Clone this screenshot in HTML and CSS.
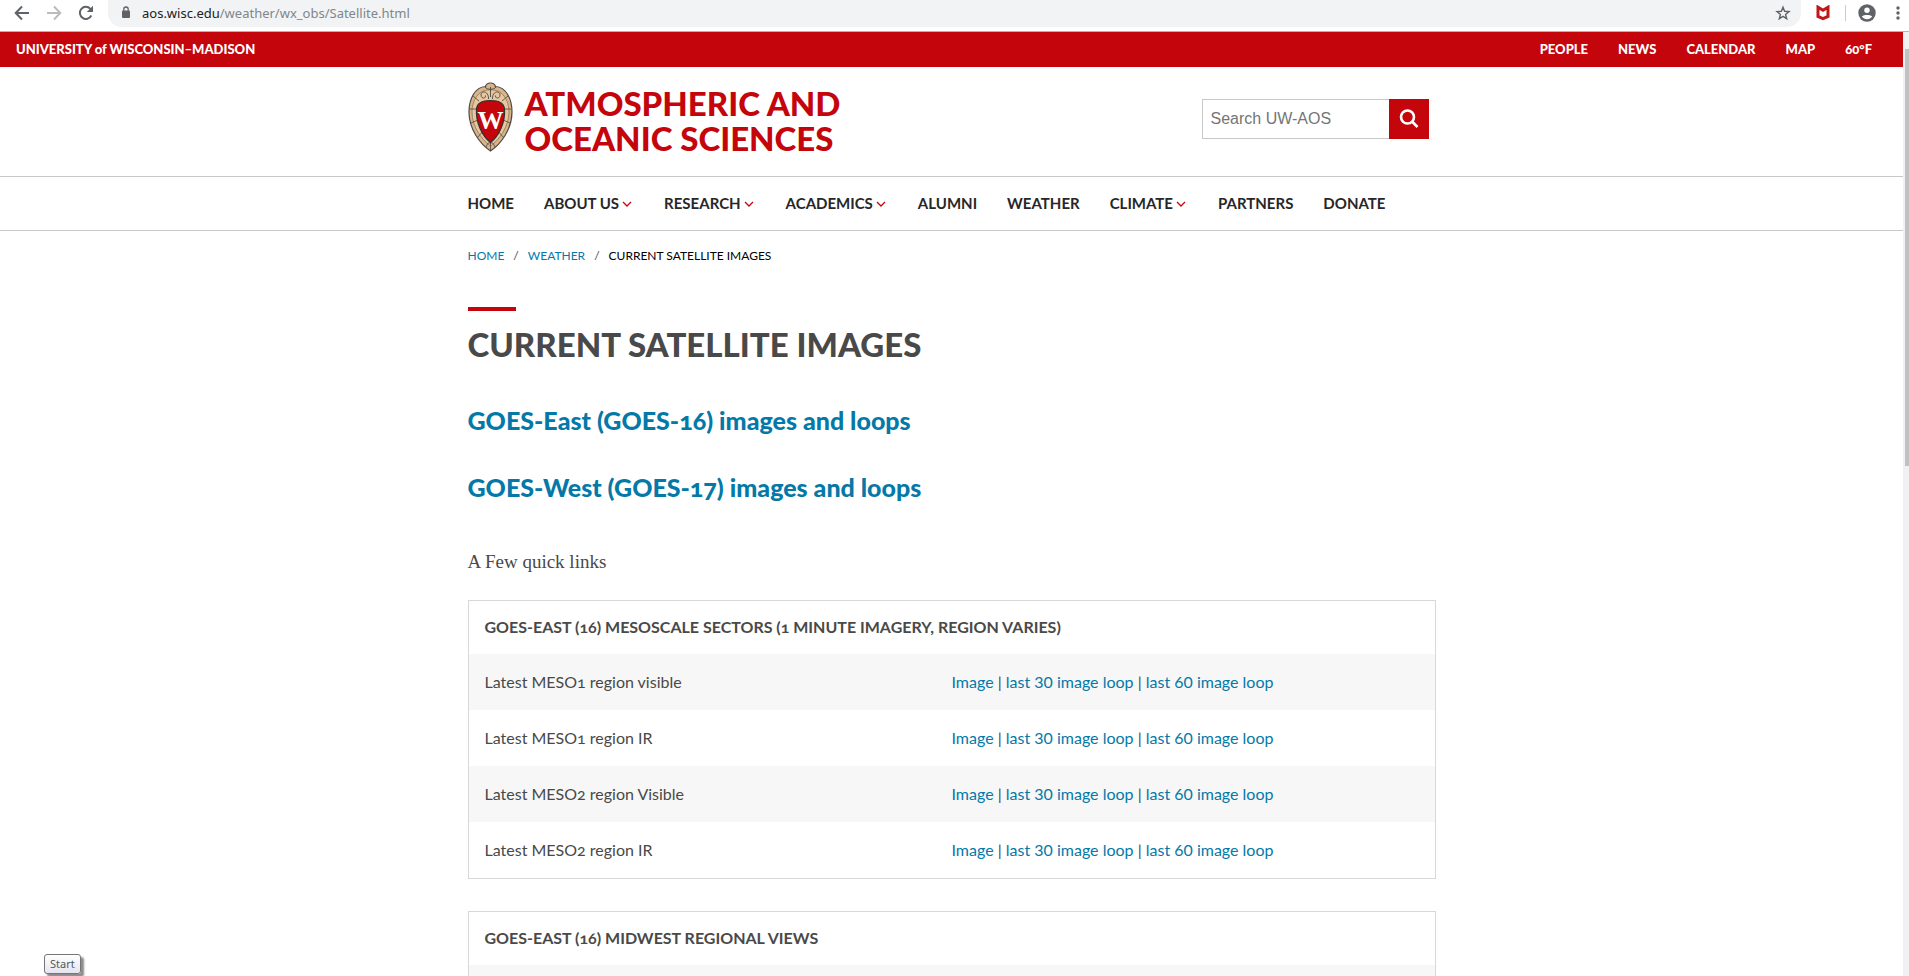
FILE: index.html
```html
<!DOCTYPE html>
<html lang="en">
<head>
<meta charset="utf-8">
<title>Current Satellite Images</title>
<link rel="stylesheet" href="styles.css">
</head>
<body>
<div class="window">
  <div class="browser-bar">
    <button class="tool" type="button" aria-label="Back"><svg width="16" height="16" viewBox="0 0 16 16" fill="none" stroke="#5f6368" stroke-width="2"><path d="M15 8H2M8 1.5L1.700 8L8 14.500"/></svg></button>
    <button class="tool" type="button" aria-label="Forward"><svg width="16" height="16" viewBox="0 0 16 16" fill="none" stroke="#babcbe" stroke-width="2"><path d="M1 8H14M8 1.500L14.300 8L8 14.500"/></svg></button>
    <button class="tool" type="button" aria-label="Reload"><svg width="16" height="16" viewBox="0 0 16 16"><path d="M13.300 10.500A6 6 0 1 1 12.400 3.900L13.800 5.300" fill="none" stroke="#5f6368" stroke-width="2"/><path d="M15 .8V7H8.800Z" fill="#5f6368"/></svg></button>
    <div class="address">
      <svg width="10" height="13" viewBox="0 0 10 13"><rect x="1" y="4.500" width="8" height="7.500" rx="1" fill="#5f6368"/><path d="M2.800 5V3.200a2.200 2.200 0 0 1 4.400 0V5" fill="none" stroke="#5f6368" stroke-width="1.300"/></svg>
      <span class="url"><span class="host">aos.wisc.edu</span>/weather/wx_obs/Satellite.html</span>
      <button class="tool" type="button" aria-label="Bookmark this page"><svg width="16" height="16" viewBox="0 0 16 16" fill="none" stroke="#5f6368" stroke-width="1.400"><path d="M8 2.200L9.600 6.300L14 6.600L10.600 9.400L11.700 13.700L8 11.300L4.300 13.700L5.400 9.400L2 6.600L6.400 6.300Z"/></svg></button>
    </div>
    <button class="tool shield" type="button" aria-label="Site safety"><svg width="16" height="16" viewBox="0 0 16 16" fill="none" stroke="#c01818" stroke-width="3"><path d="M3 2.200V11.400L8 13.600L13 11.400V2.200L8 5.300Z"/></svg></button>
    <span class="divider"></span>
    <button class="tool" type="button" aria-label="Profile"><svg width="18" height="18" viewBox="0 0 18 18"><circle cx="9" cy="9" r="8.700" fill="#5f6368"/><circle cx="9" cy="6.200" r="2.700" fill="#fff"/><path d="M3.800 12.600C4.600 10.500 13.400 10.500 14.200 12.600C12 16 6 16 3.800 12.600Z" fill="#fff"/></svg></button>
    <button class="tool menu" type="button" aria-label="Menu"><svg width="4" height="16" viewBox="0 0 4 16" fill="#5f6368"><circle cx="2" cy="3" r="1.700"/><circle cx="2" cy="8" r="1.700"/><circle cx="2" cy="13" r="1.700"/></svg></button>
  </div>

  <div class="viewport">
    <div class="page">
      <div class="topbar">
        <a class="university" href="#">UNIVERSITY of WISCONSIN–MADISON</a>
        <nav class="toplinks" aria-label="Utility">
          <a href="#">PEOPLE</a><a href="#">NEWS</a><a href="#">CALENDAR</a><a href="#">MAP</a><a href="#">60°F</a>
        </nav>
      </div>

      <header class="masthead">
        <div class="wrap masthead-row">
          <a class="brand" href="#">
            <svg class="crest" width="45" height="70" viewBox="0 0 45 70">
              <path d="M22.500 1C25 1 27 2.500 27.500 4.500C38 5 44 17 44 30C44 47 33 62 22.500 69C12 62 1 47 1 30C1 17 7 5 17.500 4.500C18 2.500 20 1 22.500 1Z" fill="#d9b48a" stroke="#4d4a46" stroke-width="1.200"/>
              <path d="M22.500 8C34 7 41 18 41 30C41 45 31 58 22.500 64C14 58 4 45 4 30C4 18 11 7 22.500 8Z" fill="#e6c7a0" stroke="#8c7458" stroke-width=".8"/>
              <path d="M1.500 27H8M37 27H43.500M5 14L11 19M40 14L34 19M3 41L10 38M42 41L35 38M10 55L15 49M35 55L30 49M22.500 60V69M18 65L20 61H25L27 65" fill="none" stroke="#5d5145" stroke-width=".9"/>
              <path d="M22.500 5V15M20.500 17C21 9 13 8 13 13C13 17 18 17 17.500 13.500M24.500 17C24 9 32 8 32 13C32 17 27 17 27.500 13.500M17 5C19 8 26 8 28 5" fill="none" stroke="#4d4a46" stroke-width=".9"/>
              <path d="M8.500 27C9 21 14 18.500 22.500 18.500C31 18.500 36 21 36.500 27C37.500 40 31 54 22.500 60.500C14 54 7.500 40 8.500 27Z" fill="#c5050c" stroke="#33302e" stroke-width="1.200"/>
              <text class="crest-letter" x="22.500" y="47" text-anchor="middle">W</text>
            </svg>
            <span class="brand-name">ATMOSPHERIC AND<br>OCEANIC SCIENCES</span>
          </a>
          <form class="search">
            <input type="text" aria-label="Search UW-AOS" placeholder="Search UW-AOS">
            <button type="submit" aria-label="Search"><svg width="20" height="20" viewBox="0 0 20 20" fill="none" stroke="#fff" stroke-width="2.600"><circle cx="8.500" cy="8" r="6.500"/><path d="M13 12.500L18.500 18"/></svg></button>
          </form>
        </div>
      </header>

      <nav class="mainnav" aria-label="Main">
        <div class="wrap nav-row">
          <a href="#">HOME</a>
          <a href="#">ABOUT US<svg class="chev" viewBox="0 0 10 6"><path d="M1 1L5 5L9 1"/></svg></a>
          <a href="#">RESEARCH<svg class="chev" viewBox="0 0 10 6"><path d="M1 1L5 5L9 1"/></svg></a>
          <a href="#">ACADEMICS<svg class="chev" viewBox="0 0 10 6"><path d="M1 1L5 5L9 1"/></svg></a>
          <a href="#">ALUMNI</a>
          <a href="#">WEATHER</a>
          <a href="#">CLIMATE<svg class="chev" viewBox="0 0 10 6"><path d="M1 1L5 5L9 1"/></svg></a>
          <a href="#">PARTNERS</a>
          <a href="#">DONATE</a>
        </div>
      </nav>

      <main class="wrap">
        <nav class="crumbs" aria-label="Breadcrumb">
          <a href="#">HOME</a><span class="slash">/</span><a href="#">WEATHER</a><span class="slash">/</span><span>CURRENT SATELLITE IMAGES</span>
        </nav>
        <h1 class="title">CURRENT SATELLITE IMAGES</h1>
        <h2 class="subhead"><a href="#">GOES-East (GOES-16) images and loops</a></h2>
        <h2 class="subhead"><a href="#">GOES-West (GOES-17) images and loops</a></h2>
        <p class="intro">A Few quick links</p>

        <table class="links">
          <thead><tr><th colspan="2">GOES-EAST (16) MESOSCALE SECTORS (1 MINUTE IMAGERY, REGION VARIES)</th></tr></thead>
          <tbody>
            <tr><td>Latest MESO1 region visible</td><td><a href="#">Image</a> | <a href="#">last 30 image loop</a> | <a href="#">last 60 image loop</a></td></tr>
            <tr><td>Latest MESO1 region IR</td><td><a href="#">Image</a> | <a href="#">last 30 image loop</a> | <a href="#">last 60 image loop</a></td></tr>
            <tr><td>Latest MESO2 region Visible</td><td><a href="#">Image</a> | <a href="#">last 30 image loop</a> | <a href="#">last 60 image loop</a></td></tr>
            <tr><td>Latest MESO2 region IR</td><td><a href="#">Image</a> | <a href="#">last 30 image loop</a> | <a href="#">last 60 image loop</a></td></tr>
          </tbody>
        </table>

        <table class="links">
          <thead><tr><th colspan="2">GOES-EAST (16) MIDWEST REGIONAL VIEWS</th></tr></thead>
          <tbody><tr><td></td><td></td></tr></tbody>
        </table>
      </main>
    </div>
    <div class="scrollbar"><div class="thumb"></div></div>
  </div>
  <div class="tooltip" role="tooltip">Start</div>
</div>
</body>
</html>
```
FILE: styles.css
```css
* { box-sizing: border-box; }

body {
  margin: 0;
  background: #fff;
  color: #494949;
  font-family: Lato, "Noto Sans", sans-serif;
  font-size: 16px;
}

a { color: #0479a8; text-decoration: none; }
button { border: 0; padding: 0; background: none; font: inherit; }

.window {
  position: relative;
  display: flex;
  flex-direction: column;
  height: 100vh;
  overflow: hidden;
}

/* Browser toolbar */
.browser-bar {
  flex: none;
  display: flex;
  align-items: center;
  gap: 16px;
  height: 32px;
  padding: 0 9px 6px 14px;
  border-bottom: 1px solid #b4b4b4;
}
.tool { display: flex; flex: none; }
.address {
  flex: 1;
  display: flex;
  align-items: center;
  gap: 11px;
  height: 28px;
  margin-left: -2px;
  padding: 0 10px 0 13px;
  border-radius: 0 0 14px 14px;
  background: #f1f3f4;
}
.url {
  flex: 1;
  color: #80868b;
  font: 13px/20px "Noto Sans", sans-serif;
}
.host { color: #202124; }
.shield { margin-right: -2px; margin-left: -2px; }
.divider { width: 1px; height: 16px; background: #c8cacc; }
.browser-bar .divider + .tool { margin-left: -4px; }
.menu { margin-left: 4px; }

.viewport { flex: 1; display: flex; min-height: 0; }
.page { flex: 1; min-width: 0; overflow: hidden; }
.scrollbar { width: 6px; padding: 17px 0 0 2px; background: #f1f1f1; }
.thumb { height: 45%; background: #c1c1c1; }

.wrap { max-width: 968px; margin: 0 auto; }

/* University bar */
.topbar {
  display: flex;
  align-items: center;
  justify-content: space-between;
  height: 35px;
  padding: 0 31px 1px 16px;
  background: #c5050c;
  font-size: 13px;
  font-weight: 900;
  font-variant-numeric: oldstyle-nums;
}
.topbar a { color: #fff; }
.toplinks { display: flex; gap: 30px; }

/* Masthead */
.masthead { padding: 15px 0 20px; border-bottom: 1px solid #c8c8c8; }
.masthead-row { display: flex; align-items: center; justify-content: space-between; padding-right: 7px; }
.brand { display: flex; align-items: flex-start; gap: 12px; color: #c5050c; }
.crest { display: block; }
.crest-letter { fill: #fff; font: bold 26px "Liberation Serif", serif; }
.brand-name { padding-top: 4px; font-size: 33px; font-weight: 900; line-height: 35px; }
.search { display: flex; height: 40px; }
.search input {
  width: 187px;
  padding: 0 8px;
  border: 1px solid #c8c8c8;
  border-right: 0;
  border-radius: 0;
  font: 16px "Liberation Sans", sans-serif;
}
.search input::placeholder { color: #757575; }
.search button {
  display: flex;
  align-items: center;
  justify-content: center;
  width: 40px;
  background: #c5050c;
}

/* Main navigation */
.mainnav { border-bottom: 1px solid #c8c8c8; }
.nav-row { display: flex; gap: 30px; padding: 16px 0; }
.nav-row a { color: #282728; font-size: 15px; font-weight: 700; line-height: 21px; white-space: nowrap; }
.chev { width: 10px; height: 6px; margin: 0 2px 2px 3px; fill: none; stroke: #c5050c; stroke-width: 1.300; }

/* Content */
.crumbs { display: flex; padding: 15px 0 17px; color: #000; font-size: 12px; line-height: 20px; }
.slash { margin: 0 9px; color: #494949; }
.title {
  margin: 24px 0 40px;
  font-size: 33px;
  font-weight: 900;
  line-height: 40px;
}
.title::before {
  content: "";
  display: block;
  width: 48px;
  height: 4px;
  margin-bottom: 13px;
  background: #c5050c;
}
.subhead {
  margin: 0 0 35px;
  font-size: 25px;
  font-weight: 900;
  line-height: 32px;
  font-variant-numeric: oldstyle-nums;
}
.intro { margin: 45px 0 24px; font: 19px/28px "Liberation Serif", serif; }

.links {
  width: 100%;
  margin-bottom: 32px;
  border: 1px solid #d6d7d9;
  border-collapse: separate;
  border-spacing: 0;
  table-layout: fixed;
  line-height: 24px;
}
.links th { padding: 14px 16px 15px; text-align: left; font-weight: 700; font-variant-numeric: oldstyle-nums; }
.links td { height: 56px; padding: 16px; }
.links td:first-child { font-variant-numeric: oldstyle-nums; }
.links td + td { padding-left: 0; }
.links tbody tr:nth-child(odd) { background: #f7f7f7; }

/* Taskbar tooltip */
.tooltip {
  position: absolute;
  bottom: 2px;
  left: 44px;
  padding: 0 5px;
  border: 1px solid #767676;
  border-radius: 3px;
  background: linear-gradient(#fff, #e4e5f0);
  box-shadow: 3px 3px 2px rgba(0, 0, 0, .45);
  color: #575757;
  font: 11px/18px "Noto Sans", sans-serif;
}
```
